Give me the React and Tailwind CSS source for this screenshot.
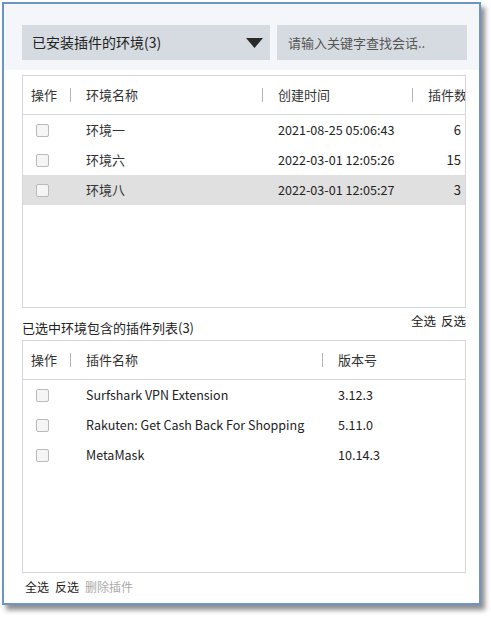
import React from "react";

const font = { fontFamily: '"Noto Sans CJK SC", "Noto Sans", sans-serif' };

function Cb() {
  return <div className="w-[13px] h-[13px] border border-[#bababa] bg-[#f5f5f5] rounded-[2px]" />;
}

function Sep() {
  return <div className="w-px h-[14px] bg-[#b5b5b5] shrink-0" />;
}

export default function App() {
  const envs = [
    ["环境一", "2021-08-25 05:06:43", "6", false],
    ["环境六", "2022-03-01 12:05:26", "15", false],
    ["环境八", "2022-03-01 12:05:27", "3", true],
  ];
  const plugins = [
    ["Surfshark VPN Extension", "3.12.3"],
    ["Rakuten: Get Cash Back For Shopping", "5.11.0"],
    ["MetaMask", "10.14.3"],
  ];
  return (
    <div className="w-[491px] h-[617px] bg-white text-[#333] text-[13px]" style={font}>
      <div className="ml-[2px] mt-[2px] w-[479px] h-[603px] border-2 border-[#6c94c4] shadow-[4px_5px_5px_rgba(0,0,0,0.45)] bg-white flex flex-col">
        <div className="h-[66px] bg-[#f4f6f9] pl-[18px] pt-[21px] flex gap-[7px]">
          <div className="w-[248px] h-[35px] bg-[#d6dbe1] flex items-center justify-between pl-[10px] pr-[7px]">
            <span className="text-[14px] text-[#222]">已安装插件的环境(3)</span>
            <svg width="17" height="10" viewBox="0 0 17 10"><path d="M0 0 L17 0 L8.5 10 Z" fill="#2a2a2a" /></svg>
          </div>
          <div className="w-[190px] h-[35px] bg-[#d6dbe1] flex items-center pl-[11px]">
            <span className="text-[13px] text-[#555]">请输入关键字查找会话..</span>
          </div>
        </div>
        <div className="ml-[18px] mt-[5px] w-[444px] h-[233px] border border-[#d3d7dc] flex flex-col overflow-hidden">
          <div className="h-[39px] shrink-0 border-b border-[#d3d7dc] flex items-center">
            <span className="ml-[8px] w-[39px] shrink-0">操作</span>
            <Sep />
            <span className="ml-[15px] w-[176px] shrink-0">环境名称</span>
            <Sep />
            <span className="ml-[15px] w-[134px] shrink-0">创建时间</span>
            <Sep />
            <span className="ml-[15px] whitespace-nowrap">插件数</span>
          </div>
          {envs.map(([n, t, c, sel]) => (
            <div key={n} className={"h-[30px] flex items-center " + (sel ? "bg-[#e0e0e0]" : "")}>
              <div className="ml-[13px] w-[50px] shrink-0"><Cb /></div>
              <span className="w-[192px] shrink-0">{n}</span>
              <span className="w-[150px] shrink-0 text-[#222] text-[12.6px]">{t}</span>
              <span className="w-[33px] shrink-0 text-right text-[#222]">{c}</span>
            </div>
          ))}
        </div>
        <div className="h-[32px] ml-[18px] w-[444px] flex justify-between">
          <span className="self-end mb-[3px] text-[13px] text-[#222]">已选中环境包含的插件列表(3)</span>
          <span className="mt-[4px] text-[12.5px] text-[#222] flex gap-[5px]"><span>全选</span><span>反选</span></span>
        </div>
        <div className="ml-[18px] w-[444px] h-[233px] border border-[#d3d7dc] flex flex-col overflow-hidden">
          <div className="h-[39px] shrink-0 border-b border-[#d3d7dc] flex items-center">
            <span className="ml-[8px] w-[39px] shrink-0">操作</span>
            <Sep />
            <span className="ml-[15px] w-[236px] shrink-0">插件名称</span>
            <Sep />
            <span className="ml-[15px]">版本号</span>
          </div>
          {plugins.map(([n, v]) => (
            <div key={n} className="h-[30px] flex items-center text-[#222]">
              <div className="ml-[13px] w-[50px] shrink-0"><Cb /></div>
              <span className="w-[252px] shrink-0 whitespace-nowrap text-[12.5px]">{n}</span>
              <span className="text-[12.6px]">{v}</span>
            </div>
          ))}
        </div>
        <div className="ml-[21px] mt-[5px] text-[12px] flex gap-[6px]">
          <span className="text-[#222]">全选</span>
          <span className="text-[#222]">反选</span>
          <span className="text-[#aaa]">删除插件</span>
        </div>
      </div>
    </div>
  );
}
